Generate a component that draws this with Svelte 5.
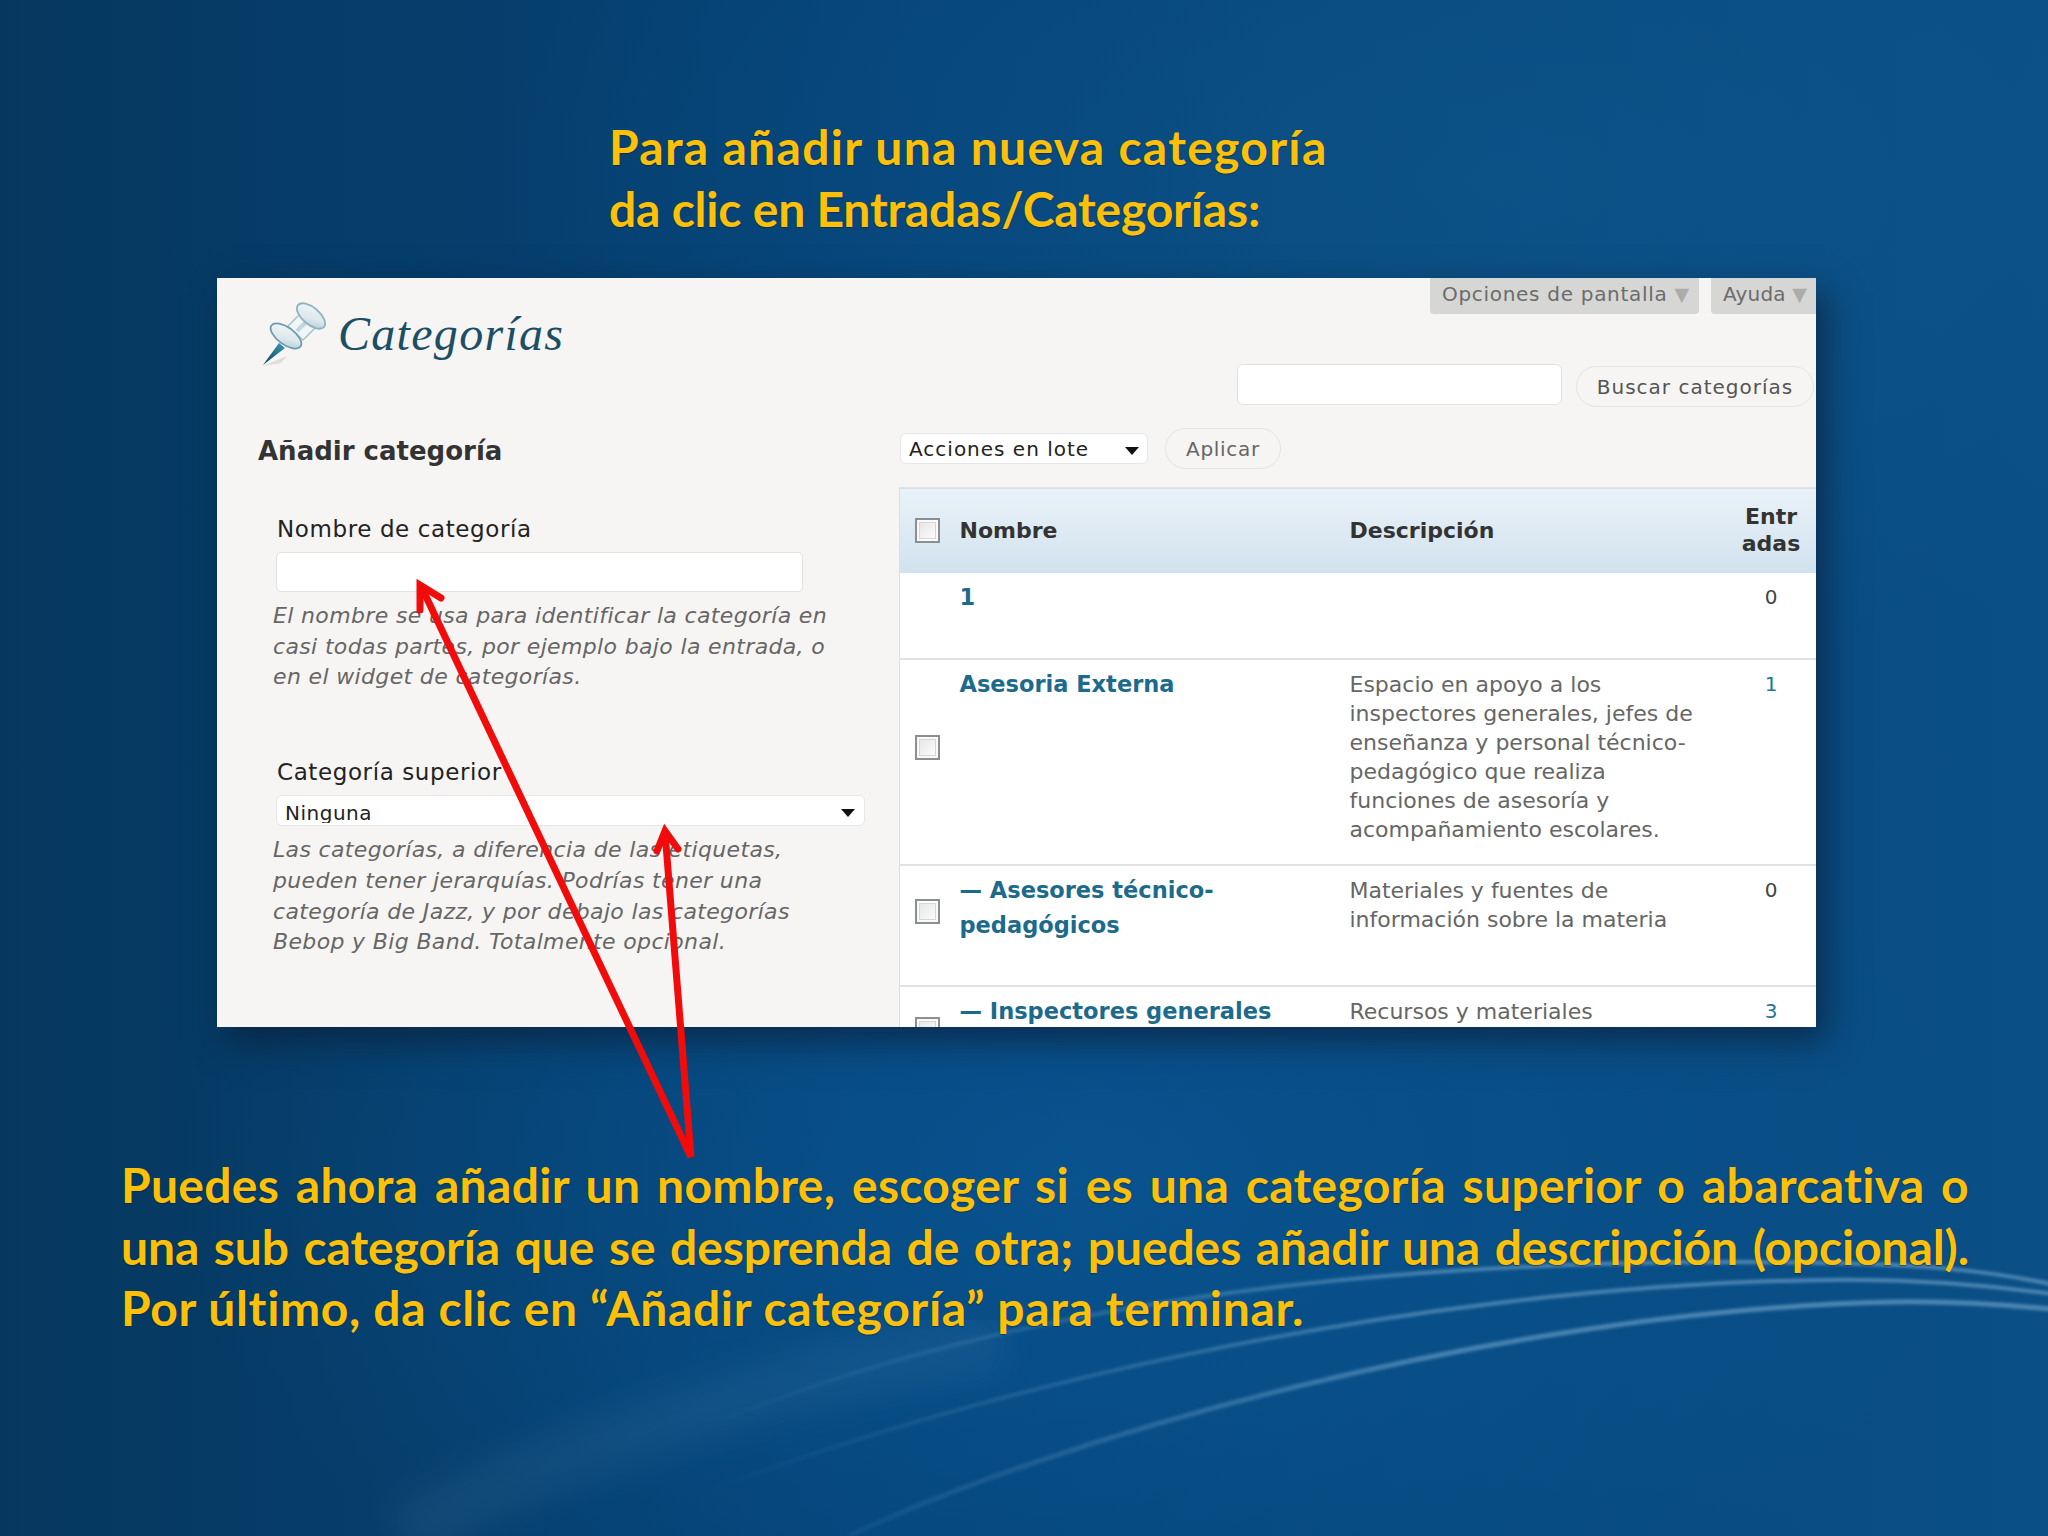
<script>
  const rows = [
    { name: ["1"], desc: [], count: "0", noCheck: true, height: 86 },
    {
      name: ["Asesoria Externa"],
      desc: [
        "Espacio en apoyo a los",
        "inspectores generales, jefes de",
        "enseñanza y personal técnico-",
        "pedagógico que realiza",
        "funciones de asesoría y",
        "acompañamiento escolares."
      ],
      count: "1",
      linked: true,
      height: 206
    },
    {
      name: ["— Asesores técnico-", "pedagógicos"],
      desc: ["Materiales y fuentes de", "información sobre la materia"],
      count: "0",
      height: 121
    },
    {
      name: ["— Inspectores generales"],
      desc: ["Recursos y materiales"],
      count: "3",
      linked: true,
      height: 116
    }
  ];

  const help_name = [
    "El nombre se usa para identificar la categoría en",
    "casi todas partes, por ejemplo bajo la entrada, o",
    "en el widget de categorías."
  ];

  const help_parent = [
    "Las categorías, a diferencia de las etiquetas,",
    "pueden tener jerarquías. Podrías tener una",
    "categoría de Jazz, y por debajo las categorías",
    "Bebop y Big Band. Totalmente opcional."
  ];
</script>

<div class="slide">
  <svg class="swoosh" viewBox="0 0 2048 1536" aria-hidden="true">
    <defs>
      <linearGradient id="arcfade" gradientUnits="userSpaceOnUse" x1="560" y1="1500" x2="1800" y2="1280">
        <stop offset="0.12" stop-color="#7fb2d8" stop-opacity="0" />
        <stop offset="0.4" stop-color="#7fb2d8" stop-opacity="0.22" />
        <stop offset="0.7" stop-color="#8fbfe0" stop-opacity="0.45" />
        <stop offset="1" stop-color="#8fbfe0" stop-opacity="0.5" />
      </linearGradient>
      <filter id="soft"><feGaussianBlur stdDeviation="1.6" /></filter>
      <filter id="softer"><feGaussianBlur stdDeviation="16" /></filter>
    </defs>
    <path d="M400 1536C560 1450 760 1380 1000 1340" fill="none" stroke="#6a9fc8" stroke-opacity="0.1" stroke-width="60" filter="url(#softer)" />
    <g fill="none" stroke="url(#arcfade)" filter="url(#soft)">
      <path d="M700 1430C1000 1300 1400 1255 1828 1263C1900 1264 1980 1268 2060 1286" stroke-width="4" />
      <path d="M600 1536C900 1400 1400 1285 1828 1280C1900 1279 1980 1284 2060 1295" stroke-width="4" />
      <path d="M849 1536C1050 1440 1500 1310 1893 1302C1950 1301 2000 1304 2060 1310" stroke-width="5" />
    </g>
  </svg>

  <h1 class="intro">
    <span class="intro-first">Para añadir una nueva categoría</span>
    <span class="intro-second">da clic en Entradas/Categorías:</span>
  </h1>

  <section class="panel">
    <div class="form-col">
      <div class="page-title">
        <svg class="pin" viewBox="0 0 80 80" aria-hidden="true">
          <defs>
            <linearGradient id="capfill" x1="0" y1="0" x2="1" y2="1">
              <stop offset="0" stop-color="#f4f8fa" />
              <stop offset="0.6" stop-color="#dbe8ed" />
              <stop offset="1" stop-color="#a9c5d1" />
            </linearGradient>
            <linearGradient id="needlefill" x1="1" y1="0" x2="0" y2="1">
              <stop offset="0" stop-color="#3b9db3" />
              <stop offset="1" stop-color="#0d3f56" />
            </linearGradient>
          </defs>
          <path d="M8 70 32 60 26 67Z" fill="#cfcdca" opacity="0.6" />
          <path d="M8 69 24 47 30 52Z" fill="url(#needlefill)" />
          <path d="M33 30 46 17 60 32 48 44Z" fill="#f0f6f8" stroke="#a9c1cc" stroke-width="1.5" />
          <path d="M42 35 52 25" stroke="#c3d6de" stroke-width="4" />
          <ellipse cx="31" cy="40" rx="18" ry="8.5" transform="rotate(36 31 40)" fill="url(#capfill)" stroke="#6f9bad" stroke-width="1.8" />
          <ellipse cx="56" cy="20" rx="17" ry="8.5" transform="rotate(40 56 20)" fill="url(#capfill)" stroke="#93b2c0" stroke-width="1.8" />
        </svg>
        <h2>Categorías</h2>
      </div>

      <h3>Añadir categoría</h3>

      <div class="field first">
        <label for="cat-name">Nombre de categoría</label>
        <input id="cat-name" class="text-input" type="text" />
        <p class="help">
          {#each help_name as line}<span>{line}</span>{/each}
        </p>
      </div>

      <div class="field second">
        <span class="label">Categoría superior</span>
        <div class="select wide">
          <span class="clip">Ninguna</span>
          <i class="caret"></i>
        </div>
        <p class="help">
          {#each help_parent as line}<span>{line}</span>{/each}
        </p>
      </div>
    </div>

    <div class="list-col">
      <div class="tabs">
        <div class="tab options">Opciones de pantalla <b>▼</b></div>
        <div class="tab help-tab">Ayuda <b>▼</b></div>
      </div>

      <div class="search">
        <input class="search-input" type="text" />
        <div class="btn search-btn">Buscar categorías</div>
      </div>

      <div class="bulk">
        <div class="select bulk-select">
          <span>Acciones en lote</span>
          <i class="caret"></i>
        </div>
        <div class="btn apply">Aplicar</div>
      </div>

      <table>
        <colgroup>
          <col class="c-check" />
          <col class="c-name" />
          <col class="c-desc" />
          <col class="c-count" />
        </colgroup>
        <thead>
          <tr>
            <th class="check"><span class="box"></span></th>
            <th>Nombre</th>
            <th>Descripción</th>
            <th class="count-head">Entr<br />adas</th>
          </tr>
        </thead>
        <tbody>
          {#each rows as row}
            <tr style="height: {row.height}px">
              <td class="check">
                {#if !row.noCheck}<span class="box"></span>{/if}
              </td>
              <td class="name">
                {#each row.name as line}<span>{line}</span>{/each}
              </td>
              <td class="desc">
                {#each row.desc as line}<span>{line}</span>{/each}
              </td>
              <td class="count" class:linked={row.linked}>{row.count}</td>
            </tr>
          {/each}
        </tbody>
      </table>
    </div>
  </section>

  <p class="outro">
    <span class="full">Puedes ahora añadir un nombre, escoger si es una categoría superior o abarcativa o</span>
    <span class="full tight">una sub categoría que se desprenda de otra; puedes añadir una descripción (opcional).</span>
    <span class="last">Por último, da clic en “Añadir categoría” para terminar.</span>
  </p>

  <svg class="arrows" viewBox="0 0 2048 1536" aria-hidden="true">
    <g fill="none" stroke="#f20b0b" stroke-width="7">
      <path d="M691 1157 421 586" />
      <path d="M691 1157 665 832" />
      <path d="M420 610 420 585 441 598" stroke-linecap="round" />
      <path d="M657 851 665 831 678 849" stroke-linecap="round" />
    </g>
  </svg>
</div>

<style>
  :global(body) {
    margin: 0;
    background: #04406f;
  }

  .slide {
    position: relative;
    width: 2048px;
    height: 1536px;
    overflow: hidden;
    box-sizing: border-box;
    padding-top: 116px;
    background:
      radial-gradient(ellipse 900px 560px at 1080px 1180px, rgba(10, 88, 150, 0.7), rgba(10, 88, 150, 0) 100%),
      radial-gradient(ellipse 1000px 500px at 1500px 180px, rgba(16, 88, 140, 0.55), rgba(16, 88, 140, 0) 100%),
      linear-gradient(90deg, #06385f 0%, #05447a 45%, #0a4f86 100%);
  }

  .swoosh,
  .arrows {
    position: absolute;
    left: 0;
    top: 0;
    width: 2048px;
    height: 1536px;
    pointer-events: none;
  }

  .intro,
  .outro {
    position: relative;
    margin: 0;
    font-family: Lato, "Open Sans", sans-serif;
    font-weight: 700;
    font-size: 48px;
    line-height: 61.5px;
    color: #fdc009;
    text-shadow: 0 1px 1px rgba(0, 30, 60, 0.5);
  }

  .intro {
    margin-left: 609px;
  }

  .intro-first {
    letter-spacing: 1.3px;
  }

  .intro-second {
    letter-spacing: -0.2px;
  }

  .intro span,
  .outro span {
    display: block;
  }

  .outro {
    width: 1848px;
    margin: 127px 0 0 121px;
  }

  .outro .full {
    text-align: justify;
    text-align-last: justify;
    letter-spacing: 0.3px;
  }

  .outro .tight {
    letter-spacing: -0.1px;
  }

  .outro .last {
    letter-spacing: 0.65px;
  }

  .panel {
    position: relative;
    display: flex;
    width: 1599px;
    height: 749px;
    margin: 39px 0 0 217px;
    overflow: hidden;
    background: #f7f5f3;
    box-shadow: 10px 14px 32px rgba(12, 24, 44, 0.6);
    font-family: "DejaVu Sans", Verdana, sans-serif;
    font-size: 20px;
  }

  .form-col {
    width: 682px;
    flex: none;
    box-sizing: border-box;
  }

  .page-title {
    display: flex;
    align-items: center;
    height: 110px;
    padding-left: 38px;
  }

  .pin {
    width: 80px;
    height: 80px;
    flex: none;
    margin-top: 5px;
  }

  h2 {
    margin: 0 0 0 3px;
    font-family: "Liberation Serif", serif;
    font-style: italic;
    font-weight: 400;
    font-size: 48px;
    letter-spacing: 1.3px;
    color: #1c4f66;
  }

  h3 {
    margin: 45px 0 0 41px;
    font-size: 26px;
    line-height: 36px;
    font-weight: 700;
    color: #333;
  }

  .field {
    margin-left: 56px;
  }

  .first {
    margin-top: 45px;
  }

  .second {
    margin-top: 64px;
  }

  label,
  .label {
    display: block;
    margin-left: 4px;
    font-size: 23px;
    letter-spacing: 0.6px;
    line-height: 30px;
    color: #222;
  }

  .text-input {
    display: block;
    box-sizing: border-box;
    width: 527px;
    height: 40px;
    margin: 8px 0 0 3px;
    background: #fff;
    border: 1px solid #e2e2e2;
    border-radius: 5px;
    padding: 0;
  }

  .help {
    margin: 9px 0 0 0;
    font-style: italic;
    font-size: 22px;
    letter-spacing: 0.35px;
    line-height: 30.7px;
    color: #666;
  }

  .help span {
    display: block;
    white-space: nowrap;
  }

  .select {
    display: flex;
    align-items: center;
    justify-content: space-between;
    box-sizing: border-box;
    background: #fff;
    border: 1px solid #e6e6e6;
    border-radius: 6px;
    color: #222;
  }

  .wide {
    width: 589px;
    height: 31px;
    margin: 8px 0 0 3px;
    padding: 0 9px 0 8px;
    font-size: 20px;
    letter-spacing: 0.5px;
  }

  .clip {
    display: block;
    height: 24px;
    line-height: 28px;
    overflow: hidden;
  }

  .caret {
    width: 0;
    height: 0;
    margin-top: 5px;
    border-left: 7px solid transparent;
    border-right: 7px solid transparent;
    border-top: 8px solid #111;
  }

  .list-col {
    flex: 1;
    min-width: 0;
  }

  .tabs {
    display: flex;
    justify-content: flex-end;
    gap: 12px;
  }

  .tab {
    box-sizing: border-box;
    height: 36px;
    padding: 2px 0 0 12px;
    background: #d6d6d5;
    border-radius: 0 0 4px 4px;
    font-size: 20px;
    letter-spacing: 0.7px;
    line-height: 28px;
    color: #6c6c6c;
    white-space: nowrap;
  }

  .tab b {
    font-size: 19px;
    font-weight: 400;
    letter-spacing: 0;
    color: #acacac;
  }

  .options {
    width: 269px;
  }

  .help-tab {
    width: 105px;
    border-radius: 0 0 0 4px;
    letter-spacing: 0.2px;
  }

  .search {
    display: flex;
    align-items: flex-start;
    gap: 14px;
    margin: 50px 0 0 338px;
  }

  .search-input {
    box-sizing: border-box;
    width: 325px;
    height: 41px;
    padding: 0;
    background: #fff;
    border: 1px solid #e2e2e2;
    border-radius: 6px;
  }

  .btn {
    box-sizing: border-box;
    display: flex;
    align-items: center;
    justify-content: center;
    height: 41px;
    background: #f7f5f3;
    border: 1px solid #e3e3e3;
    border-radius: 21px;
    font-size: 20px;
    color: #555;
    white-space: nowrap;
  }

  .search-btn {
    width: 238px;
    margin-top: 2px;
    letter-spacing: 1px;
  }

  .bulk {
    display: flex;
    align-items: center;
    gap: 17px;
    margin: 21px 0 0 1px;
  }

  .bulk-select {
    width: 248px;
    height: 31px;
    padding: 0 8px 0 8px;
    font-size: 20px;
    letter-spacing: 1px;
  }

  .apply {
    width: 116px;
    color: #666;
    letter-spacing: 0.7px;
  }

  table {
    width: 917px;
    margin-top: 18px;
    table-layout: fixed;
    border-collapse: collapse;
    background: #fff;
    border-left: 1px solid #dedede;
  }

  .c-check { width: 52px; }
  .c-name { width: 389px; }
  .c-desc { width: 385px; }
  .c-count { width: 91px; }

  thead tr {
    height: 85px;
    background: linear-gradient(180deg, #eaf2f8 0%, #d1e2ef 100%);
    border-top: 1px solid #e4e4e4;
  }

  th {
    padding: 0 0 0 8px;
    font-size: 22px;
    text-align: left;
    color: #333;
    vertical-align: middle;
  }

  th.check,
  td.check {
    padding: 0 0 0 15px;
  }

  th:nth-child(3) {
    padding-left: 9px;
  }

  th.count-head {
    padding: 0;
    text-align: center;
    line-height: 27px;
  }

  tbody tr {
    border-bottom: 2px solid #e2e2e2;
  }

  td {
    padding: 0 0 0 9px;
    vertical-align: top;
  }

  td.check {
    vertical-align: middle;
    padding-bottom: 28px;
  }

  .box {
    display: block;
    box-sizing: border-box;
    width: 25px;
    height: 25px;
    background: linear-gradient(135deg, #e4e4e4, #fff);
    border: 2px solid #8b8f90;
    box-shadow: inset 0 0 0 2px #fafafa, inset 0 0 0 3px #d6d6d6;
  }

  td.name {
    padding: 7px 0 0 8px;
    font-size: 22.5px;
    font-weight: 700;
    line-height: 35px;
    color: #1c6a8c;
  }

  .name span,
  .desc span {
    display: block;
    white-space: nowrap;
  }

  td.desc {
    padding-top: 10px;
    font-size: 22px;
    line-height: 29px;
    color: #666;
  }

  td.count {
    padding: 10px 0 0;
    font-size: 20px;
    line-height: 28px;
    text-align: center;
    color: #444;
  }

  td.linked {
    color: #21759b;
  }
</style>
